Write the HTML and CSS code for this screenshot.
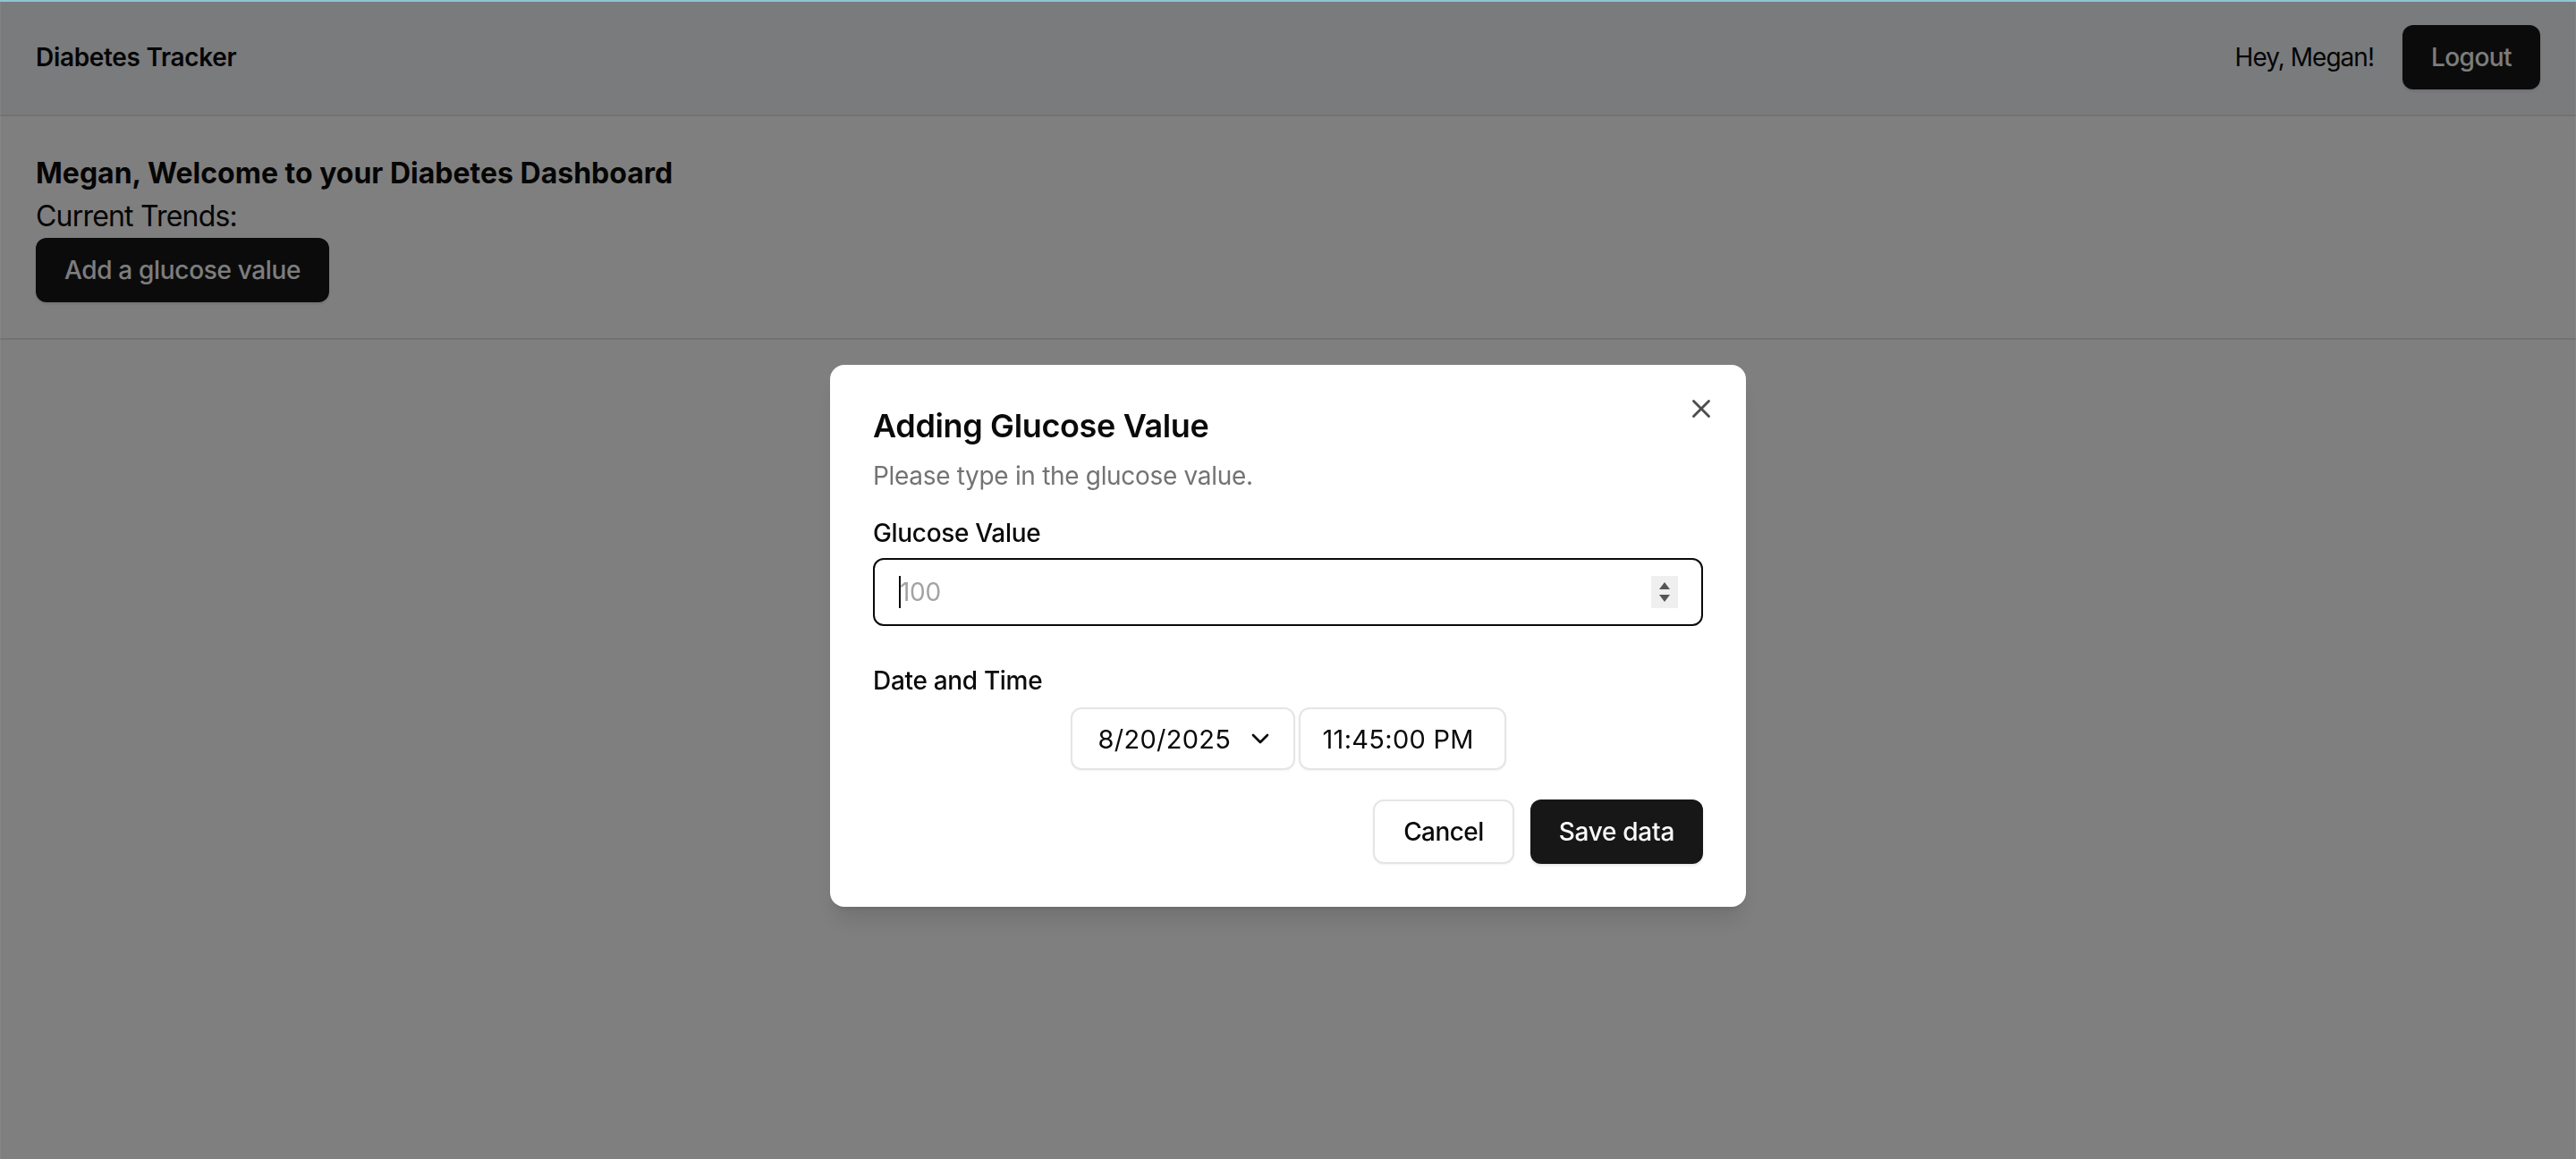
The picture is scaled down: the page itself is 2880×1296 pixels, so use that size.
FILE: index.html
```html
<!DOCTYPE html>
<html lang="en">
<head>
<meta charset="utf-8">
<title>Diabetes Tracker</title>
<link rel="stylesheet" href="styles.css">
</head>
<body>
<header class="topbar">
  <div class="brand">Diabetes Tracker</div>
  <div class="user">
    <span class="greet">Hey, Megan!</span>
    <button class="btn btn-dark" type="button">Logout</button>
  </div>
</header>
<section class="welcome">
  <h1 class="welcome-title">Megan, Welcome to your Diabetes Dashboard</h1>
  <p class="welcome-sub">Current Trends:</p>
  <button class="btn btn-dark btn-add" type="button">Add a glucose value</button>
</section>
<main class="content"></main>

<div class="overlay"></div>
<div class="frame-top"></div>

<div class="dialog" role="dialog" aria-labelledby="dlg-title">
  <button class="dialog-close" type="button" aria-label="Close">
    <svg viewBox="0 0 24 24" width="34" height="34" fill="none" stroke="currentColor" stroke-width="2" stroke-linecap="round" stroke-linejoin="round"><path d="M18 6 6 18"/><path d="m6 6 12 12"/></svg>
  </button>
  <div class="dialog-header">
    <h2 class="dialog-title" id="dlg-title">Adding Glucose Value</h2>
    <p class="dialog-desc">Please type in the glucose value.</p>
  </div>
  <div class="field">
    <label class="field-label">Glucose Value</label>
    <div class="num-input">
      <span class="caret"></span><span class="placeholder">100</span>
      <span class="spinner"><span class="tri-up"></span><span class="tri-down"></span></span>
    </div>
  </div>
  <div class="field field-dt">
    <label class="field-label">Date and Time</label>
    <div class="dt-row">
      <button class="dt-date" type="button"><span>8/20/2025</span>
        <svg viewBox="0 0 24 24" width="32" height="32" fill="none" stroke="currentColor" stroke-width="2" stroke-linecap="round" stroke-linejoin="round"><path d="m6 9 6 6 6-6"/></svg>
      </button>
      <div class="dt-time">11:45:00 PM</div>
    </div>
  </div>
  <div class="dialog-footer">
    <button class="btn btn-outline" type="button">Cancel</button>
    <button class="btn btn-dark btn-save" type="button">Save data</button>
  </div>
</div>
</body>
</html>
```
FILE: styles.css
```css
* { box-sizing: border-box; }

html, body {
  margin: 0;
  height: 100%;
}

body {
  font-family: "Inter", "Liberation Sans", sans-serif;
  color: #0a0a0a;
  background: #ffffff;
  letter-spacing: -0.02em;
}

.topbar {
  height: 130px;
  padding: 0 40px;
  display: flex;
  align-items: center;
  justify-content: space-between;
  background: #f5f6fa;
  border-bottom: 2px solid #e5e5e5;
}

.brand {
  font-size: 28px;
  font-weight: 600;
}

.user {
  display: flex;
  align-items: center;
  gap: 32px;
}

.greet {
  font-size: 28px;
  letter-spacing: -0.035em;
}

.btn {
  height: 72px;
  padding: 0 32px;
  border: none;
  border-radius: 12px;
  font-family: inherit;
  font-size: 28px;
  font-weight: 500;
  letter-spacing: -0.02em;
  cursor: pointer;
}

.btn-dark {
  background: #171717;
  color: #fafafa;
  box-shadow: 0 2px 3px rgba(0, 0, 0, 0.1);
}

.btn-add {
  letter-spacing: -0.012em;
}

.btn-save {
  letter-spacing: -0.01em;
}

.btn-outline {
  background: #ffffff;
  color: #0a0a0a;
  border: 2px solid #e5e5e5;
  box-shadow: 0 1px 2px rgba(0, 0, 0, 0.05);
}

.welcome {
  padding: 40px;
  display: flex;
  flex-direction: column;
  align-items: flex-start;
  border-bottom: 2px solid #e5e5e5;
}

.welcome-title {
  margin: 0;
  font-size: 32px;
  line-height: 48px;
  font-weight: 700;
  letter-spacing: 0;
}

.welcome-sub {
  margin: 0;
  font-size: 32px;
  line-height: 48px;
  letter-spacing: -0.025em;
}

.overlay {
  position: fixed;
  top: 2px;
  left: 0;
  right: 0;
  bottom: 0;
  background: rgba(0, 0, 0, 0.5);
  border-left: 1px solid rgba(255, 255, 255, 0.06);
  border-right: 1px solid rgba(255, 255, 255, 0.06);
}

.frame-top {
  position: fixed;
  top: 0;
  left: 0;
  right: 0;
  height: 2px;
  background: #8ec4d4;
}

.dialog {
  position: fixed;
  top: 408px;
  left: calc(50% - 512px);
  width: 1024px;
  padding: 48px;
  background: #ffffff;
  border-radius: 16px;
  box-shadow: 0 20px 25px -5px rgba(0, 0, 0, 0.1), 0 8px 10px -6px rgba(0, 0, 0, 0.1);
}

.dialog-close {
  position: absolute;
  top: 32px;
  right: 33px;
  width: 34px;
  height: 34px;
  padding: 0;
  border: none;
  background: none;
  color: #4d4d4d;
  display: flex;
}

.dialog-header {
  display: flex;
  flex-direction: column;
  gap: 16px;
}

.dialog-title {
  margin: 0;
  font-size: 36px;
  line-height: 40px;
  font-weight: 600;
  letter-spacing: -0.01em;
}

.dialog-desc {
  margin: 0;
  font-size: 28px;
  line-height: 40px;
  color: #737373;
}

.field {
  margin-top: 30px;
  display: flex;
  flex-direction: column;
  gap: 14px;
}

.field-dt {
  margin-top: 47px;
  gap: 16px;
}

.field-label {
  font-size: 28px;
  line-height: 28px;
  font-weight: 500;
}

.num-input {
  height: 76px;
  display: flex;
  align-items: center;
  padding: 0 26px 0 27px;
  border: 2px solid #0a0a0a;
  border-radius: 12px;
  font-size: 28px;
}

.caret {
  width: 2px;
  height: 36px;
  background: #0a0a0a;
}

.placeholder {
  color: #a3a3a3;
  margin-left: -1px;
}

.spinner {
  margin-left: auto;
  width: 30px;
  height: 36px;
  background: #efefef;
  display: flex;
  flex-direction: column;
  align-items: center;
  justify-content: center;
  gap: 6px;
}

.tri-up,
.tri-down {
  width: 0;
  height: 0;
  border-left: 6px solid transparent;
  border-right: 6px solid transparent;
}

.tri-up { border-bottom: 8px solid #555555; }
.tri-down { border-top: 8px solid #555555; }

.dt-row {
  display: flex;
  justify-content: center;
  gap: 4px;
}

.dt-date,
.dt-time {
  height: 70px;
  display: flex;
  align-items: center;
  background: #ffffff;
  border: 2px solid #e5e5e5;
  border-radius: 12px;
  box-shadow: 0 1px 2px rgba(0, 0, 0, 0.05);
  font-family: inherit;
  font-size: 29px;
  color: #0a0a0a;
  letter-spacing: 0.01em;
}

.dt-date {
  width: 251px;
  padding: 0 21px 0 29px;
  justify-content: space-between;
}

.dt-time {
  width: 232px;
  padding: 0 0 0 25px;
}

.dialog-footer {
  margin-top: 33px;
  display: flex;
  justify-content: flex-end;
  gap: 18px;
}
```
